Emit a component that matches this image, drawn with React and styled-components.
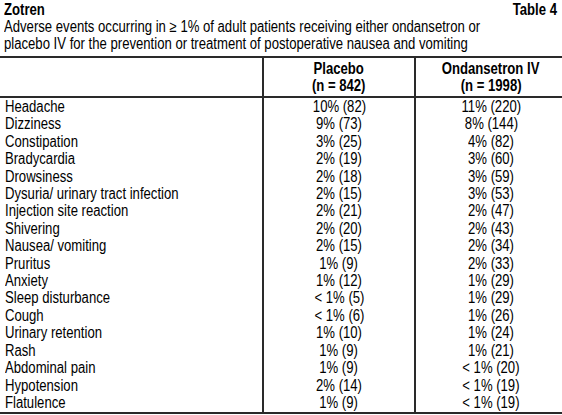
import React from 'react';
import styled, { createGlobalStyle } from 'styled-components';

const GlobalStyle = createGlobalStyle`
  html, body {
    margin: 0;
    padding: 0;
    background: #ffffff;
  }
`;

const Page = styled.div`
  width: 562px;
  font-family: "Liberation Sans", Arial, sans-serif;
  font-size: 16px;
  color: #000000;
  overflow: hidden;
`;

// Arial Narrow is not installed: squeeze Liberation Sans the way the narrow cut does
const Narrow = styled.span`
  display: inline-block;
  white-space: nowrap;
  transform: scaleX(0.82);
  transform-origin: ${({ $origin }) => $origin || 'left'} center;
`;

const Heading = styled.div`
  padding: 1px 5px 0 4px;
`;

const TitleRow = styled.div`
  display: flex;
  justify-content: space-between;
  font-weight: 700;
  line-height: 17px;
`;

const Caption = styled.div`
  line-height: 17px;
`;

const Table = styled.table`
  width: 562px;
  margin-top: 4px;
  border-collapse: collapse;
  border-top: 2px solid #2a2a2a;
  border-bottom: 2px solid #2a2a2a;
  table-layout: fixed;
`;

const HeadCell = styled.th`
  font-weight: 700;
  text-align: center;
  line-height: 17px;
  padding: 2px 0 2px;
  border-bottom: 2px solid #2a2a2a;
  border-left: ${({ $first }) => ($first ? 'none' : '2px solid #2a2a2a')};
  width: ${({ $w }) => $w}px;
`;

const Cell = styled.td`
  padding: 0 0 0 ${({ $left }) => ($left ? '5px' : '0')};
  text-align: ${({ $left }) => ($left ? 'left' : 'center')};
  line-height: 17.4px;
  height: 17.4px;
  border-left: ${({ $left }) => ($left ? 'none' : '2px solid #2a2a2a')};
  white-space: nowrap;
`;

const Spacer = styled.td`
  height: 1px;
  padding: 0;
  border-left: ${({ $left }) => ($left ? 'none' : '2px solid #2a2a2a')};
`;

const rows = [
  ['Headache', '10% (82)', '11% (220)'],
  ['Dizziness', '9% (73)', '8% (144)'],
  ['Constipation', '3% (25)', '4% (82)'],
  ['Bradycardia', '2% (19)', '3% (60)'],
  ['Drowsiness', '2% (18)', '3% (59)'],
  ['Dysuria/ urinary tract infection', '2% (15)', '3% (53)'],
  ['Injection site reaction', '2% (21)', '2% (47)'],
  ['Shivering', '2% (20)', '2% (43)'],
  ['Nausea/ vomiting', '2% (15)', '2% (34)'],
  ['Pruritus', '1% (9)', '2% (33)'],
  ['Anxiety', '1% (12)', '1% (29)'],
  ['Sleep disturbance', '< 1% (5)', '1% (29)'],
  ['Cough', '< 1% (6)', '1% (26)'],
  ['Urinary retention', '1% (10)', '1% (24)'],
  ['Rash', '1% (9)', '1% (21)'],
  ['Abdominal pain', '1% (9)', '< 1% (20)'],
  ['Hypotension', '2% (14)', '< 1% (19)'],
  ['Flatulence', '1% (9)', '< 1% (19)'],
];

const App = () => {
  return (
    <Page>
      <GlobalStyle />
      <Heading>
        <TitleRow>
          <Narrow>Zotren</Narrow>
          <Narrow $origin="right">Table 4</Narrow>
        </TitleRow>
        <Caption>
          <Narrow>Adverse events occurring in ≥ 1% of adult patients receiving either ondansetron or</Narrow>
          <br />
          <Narrow>placebo IV for the prevention or treatment of postoperative nausea and vomiting</Narrow>
        </Caption>
      </Heading>
      <Table>
        <thead>
          <tr>
            <HeadCell $first $w={262}></HeadCell>
            <HeadCell $w={150}>
              <Narrow $origin="center">Placebo</Narrow><br />
              <Narrow $origin="center">(n = 842)</Narrow>
            </HeadCell>
            <HeadCell $w={150}>
              <Narrow $origin="center">Ondansetron IV</Narrow><br />
              <Narrow $origin="center">(n = 1998)</Narrow>
            </HeadCell>
          </tr>
        </thead>
        <tbody>
          {rows.map(([name, placebo, ond]) => (
            <tr key={name}>
              <Cell $left><Narrow>{name}</Narrow></Cell>
              <Cell><Narrow $origin="center">{placebo}</Narrow></Cell>
              <Cell><Narrow $origin="center">{ond}</Narrow></Cell>
            </tr>
          ))}
          <tr>
            <Spacer $left />
            <Spacer />
            <Spacer />
          </tr>
        </tbody>
      </Table>
    </Page>
  );
};

export default App;
